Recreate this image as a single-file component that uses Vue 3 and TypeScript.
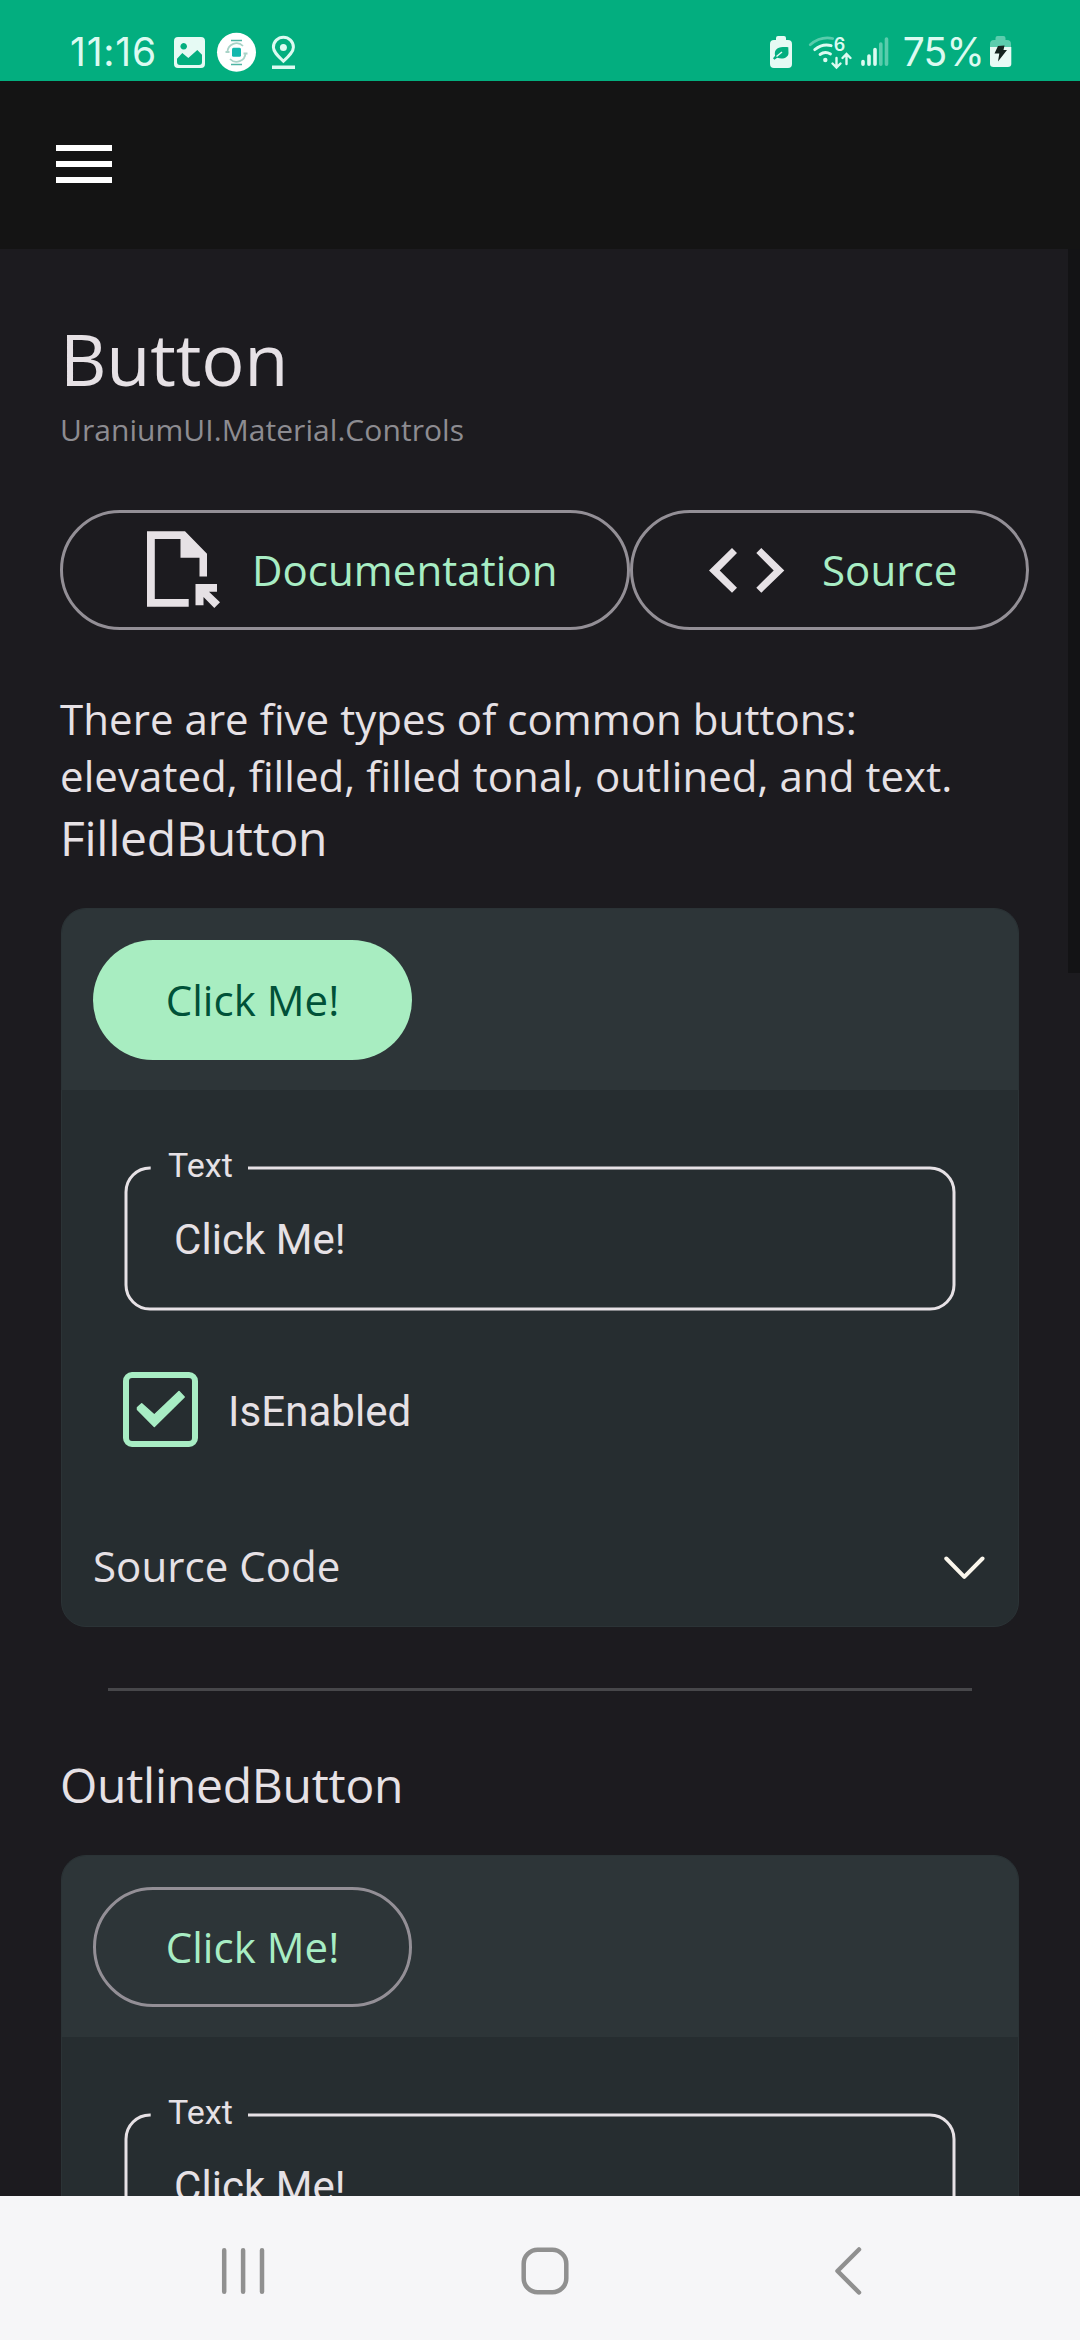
<script setup lang="ts">
interface Sample {
  title: string
  variant: 'filled' | 'outlined'
  text: string
}

const samples: Sample[] = [
  { title: 'FilledButton', variant: 'filled', text: 'Click Me!' },
  { title: 'OutlinedButton', variant: 'outlined', text: 'Click Me!' },
]
</script>

<template>
  <div class="screen">
    <header class="status">
      <span class="clock">11:16</span>
      <svg class="notifications" width="124" height="42" viewBox="0 0 124 42">
        <path fill="#e6faf4" fill-rule="evenodd" d="M4 5h23a4 4 0 0 1 4 4v23a4 4 0 0 1-4 4h-23a4 4 0 0 1-4-4v-23a4 4 0 0 1 4-4zM9.700 11a3.300 3.300 0 1 0 .01 0zM3 26.700v3.300q0 3 3 3h19q3 0 3-3v-7.300l-4.700-4.700-9 8-6-5z" />
        <circle cx="62.500" cy="20.300" r="19.500" fill="#fff" />
        <rect x="58" y="15.800" width="9" height="9" rx="1.500" fill="#14b8ae" />
        <path d="M57 8.500h11M57 32.500h11" stroke="#4fb5a4" stroke-width="1.600" />
        <path d="M53.500 20a9 9 0 0 1 15.500-6M71.500 21a9 9 0 0 1-15.500 6" fill="none" stroke="#a9d3c8" stroke-width="1.800" />
        <path d="M51.500 20h4M69.500 21.500h4" stroke="#a9d3c8" stroke-width="2" />
        <path d="M109.400 29.200C104 24 99.400 20 99.400 15.200a10 10 0 0 1 20 0C119.400 20 115 24 109.400 29.200z" fill="none" stroke="#dcfaf1" stroke-width="3" />
        <circle cx="109.400" cy="15.600" r="3.500" fill="#dcfaf1" />
        <rect x="98" y="33.500" width="23" height="3.500" fill="#dcfaf1" />
      </svg>
      <svg class="signals" width="122" height="42" viewBox="0 0 122 42">
        <path fill="#e6faf4" d="M8 4h6q2 0 2 2v2h2q4 0 4 4v20q0 4-4 4H4q-4 0-4-4V12q0-4 4-4h2V6q0-2 2-2z" />
        <path fill="#03ae7f" d="M18.300 15.200c-3-.2-8-.5-11 1.400-2.500 1.700-2.900 4.600-2.200 7.100L3 26.200l1.400 1.600 2.800-2c6 2 11-.3 11.300-4.600z" />
        <path d="M6.500 24.500l5.500-4.500" stroke="#e6faf4" stroke-width="1.400" />
        <g fill="none" stroke="#dcfaf1" stroke-width="2.800" stroke-linecap="round">
          <path d="M40.200 12.700q10.500-8.800 22.500-6.200" opacity=".4" />
          <path d="M44.700 17.700q8-6.500 16.500-4" />
          <path d="M50 22.500q5-3.700 10.500-.5" />
          <path d="M66.500 26v9M62.500 31.500l4 4 4-4M76.500 32v-9.500M72.500 26l4-4 4 4" stroke-width="2.400" />
        </g>
        <circle cx="55.300" cy="28" r="2.200" fill="#dcfaf1" />
        <text x="63.800" y="18.700" class="wifi-generation">6</text>
        <g stroke="#dcfaf1" stroke-width="3.600" stroke-linecap="round">
          <path d="M93 29.500v2.700M99 24v8.200M105 17.500v14.700" />
          <path d="M110.800 12v20.200M116.500 7v25.200" opacity=".4" />
        </g>
      </svg>
      <span class="percent">75%</span>
      <svg width="22" height="42" viewBox="0 0 22 42">
        <path fill="#5ccdae" d="M7.500 4h6q2 0 2 2v2H17q4 0 4 4v3H0v-3q0-4 4-4h1.500V6q0-2 2-2z" />
        <path fill="#eafaf5" d="M0 15h21.300v17q0 3-3.500 3H3.500Q0 35 0 32z" />
        <path fill="#15231f" d="M8 14l6.500-.5-1 4.500H17L8 29.500l1.300-8H4.500z" />
      </svg>
    </header>

    <nav class="toolbar">
      <button class="menu" aria-label="Menu"><i /><i /><i /></button>
    </nav>

    <main class="page">
      <h1>Button</h1>
      <p class="namespace">UraniumUI.Material.Controls</p>

      <div class="links">
        <button class="btn outlined documentation">
          <svg width="74" height="78" viewBox="0 0 74 78" fill="#e6e1e5">
            <path d="M0 .3h38l22 22.500v22.700h-7.500V26.700H33.500V8H7.800v60h33.900v7.700H0z" />
            <path d="M48.500 53H70v7.700h-8L73 71.300 67.300 77 56.500 66v8.300h-8z" />
          </svg>
          <span>Documentation</span>
        </button>
        <button class="btn outlined source">
          <svg width="76" height="45" viewBox="0 0 76 45" fill="#e6e1e5">
            <path d="M0 22.400L23 0l5 5-17.300 17.400L28 39.800l-5 5zM47.300 5l5-5 23 22.400-23 22.400-5-5 17.400-17.400z" />
          </svg>
          <span>Source</span>
        </button>
      </div>

      <p class="intro">There are five types of common buttons: elevated, filled, filled tonal, outlined, and text.</p>

      <template v-for="(sample, i) in samples" :key="sample.title">
        <hr v-if="i > 0" />
        <h2>{{ sample.title }}</h2>
        <section class="card">
          <div class="preview">
            <button class="btn demo" :class="sample.variant"><span>{{ sample.text }}</span></button>
          </div>
          <div class="options">
            <div class="field">
              <svg class="outline" width="832" height="146" viewBox="0 0 832 146">
                <path d="M26.700 2H26a24 24 0 0 0-24 24v93a24 24 0 0 0 24 24h780a24 24 0 0 0 24-24V26a24 24 0 0 0-24-24H124" />
              </svg>
              <span class="label">Text</span>
              <span class="value">{{ sample.text }}</span>
            </div>
            <label class="check">
              <span class="box">
                <svg width="63" height="63" viewBox="0 0 63 63">
                  <path d="M8.500 29.500L12.700 25.800 25.300 37 50 13.600 55.200 19 25.300 48.500 8.500 31.500z" fill="#a8edc4" stroke="#a8edc4" stroke-width="1.500" stroke-linejoin="round" />
                </svg>
              </span>
              <span class="caption">IsEnabled</span>
            </label>
          </div>
          <div class="expander">
            <span>Source Code</span>
            <svg width="41" height="24" viewBox="0 0 41 24">
              <path d="M2.300 2.500L20.300 20.800 38.500 2.500" />
            </svg>
          </div>
        </section>
      </template>

      <div class="scrollbar" />
    </main>

    <footer class="navbar">
      <svg width="44" height="48" viewBox="0 0 44 48">
        <path d="M3.200 3.200v41.600M22.100 3.200v41.600M41 3.200v41.600" />
      </svg>
      <svg class="home" width="48" height="48" viewBox="0 0 48 48">
        <rect x="2.700" y="2.700" width="42.600" height="42.600" rx="14" />
      </svg>
      <svg class="back" width="28" height="48" viewBox="0 0 28 48">
        <path d="M25 2.500L3.500 24l21.500 21.500" />
      </svg>
    </footer>
  </div>
</template>

<style>
body {
  margin: 0;
  background: #1c1b1f;
}
</style>

<style scoped>
.screen {
  width: 1080px;
  height: 2340px;
  display: flex;
  flex-direction: column;
  overflow: hidden;
  background: #1c1b1f;
  color: #e6e1e5;
  font-family: "Open Sans", "Noto Sans", sans-serif;
  font-size: 42px;
  letter-spacing: 0.06px;
}
h1, h2, p {
  margin: 0;
  font-weight: 400;
}
svg {
  display: block;
  flex: none;
}
button {
  font: inherit;
  letter-spacing: inherit;
  padding: 0;
  border: 0;
  background: none;
}

.status {
  height: 81px;
  flex: none;
  display: flex;
  box-sizing: border-box;
  padding: 32px 0 0 70px;
  background: #03ae7f;
  color: #dcfaf1;
  font-family: Inter, Roboto, sans-serif;
  font-size: 39px;
  line-height: 40px;
}
.clock {
  width: 104px;
  letter-spacing: 0.8px;
}
.signals {
  margin-left: 471.700px;
}
.wifi-generation {
  fill: #dcfaf1;
  font-size: 18px;
  font-weight: 600;
}
.percent {
  width: 87px;
  margin-left: 11px;
  letter-spacing: -0.8px;
}

.toolbar {
  height: 168px;
  flex: none;
  display: flex;
  align-items: center;
  box-sizing: border-box;
  padding: 0 0 8px 56px;
  background: #141414;
}
.menu {
  display: flex;
  flex-direction: column;
  gap: 10px;
  padding-top: 6px;
}
.menu i {
  width: 56px;
  height: 6px;
  background: #fff;
}

.page {
  position: relative;
  height: 1947px;
  flex: none;
  box-sizing: border-box;
  padding: 60px 60px 0;
  overflow: hidden;
}
h1 {
  font-size: 72px;
  line-height: 98px;
  letter-spacing: -0.2px;
}
.namespace {
  margin-top: 2px;
  font-size: 30px;
  line-height: 41px;
  color: #8d8c91;
}
.links {
  display: flex;
  width: 969px;
  margin-top: 60px;
}
.btn {
  height: 120px;
  box-sizing: border-box;
  border-radius: 60px;
  display: flex;
  align-items: center;
  flex: none;
  line-height: 57px;
  color: #a8edc4;
}
.btn span {
  padding-bottom: 1px;
}
.btn.outlined {
  border: 3px solid #938f96;
}
.btn.filled {
  background: #a8edc1;
  color: #005138;
}
.documentation {
  width: 570px;
  padding-left: 84px;
  gap: 31px;
}
.source {
  width: 399px;
  padding-left: 76px;
  gap: 37px;
}
.demo {
  width: 319px;
  justify-content: center;
}
.intro {
  margin-top: 60px;
  line-height: 57px;
}
h2 {
  padding-top: 1px;
  font-size: 48px;
  line-height: 65px;
  letter-spacing: -0.26px;
}
hr {
  height: 3px;
  margin: 61px 48px 60px;
  border: 0;
  background: #47474a;
}

.card {
  height: 719px;
  box-sizing: border-box;
  margin: 38px 1px 0;
  border: 1px solid #2b3336;
  border-radius: 25px;
  overflow: hidden;
  background: #262d30;
}
.preview {
  height: 181px;
  box-sizing: border-box;
  padding: 31px;
  background: #2d3538;
}
.options {
  padding: 76px 62px 0;
  font-family: Roboto, sans-serif;
}
.field {
  position: relative;
  height: 146px;
  display: flex;
  align-items: center;
}
.outline {
  position: absolute;
  left: 0;
  top: 0;
}
.outline path {
  fill: none;
  stroke: #e6e1e5;
  stroke-width: 3px;
}
.label {
  position: absolute;
  left: 44px;
  top: -21px;
  font-size: 34px;
  line-height: 40px;
}
.value {
  padding: 1px 0 0 50px;
  line-height: 50px;
}
.check {
  display: flex;
  align-items: center;
  gap: 30px;
  margin: 60px 0 0 -1px;
  line-height: 50px;
}
.caption {
  padding-top: 4px;
}
.box {
  width: 63px;
  height: 63px;
  border: 6px solid #a8edc4;
  border-radius: 9px;
}
.expander {
  display: flex;
  justify-content: space-between;
  align-items: center;
  height: 57px;
  margin: 90px 33px 0 31px;
}
.expander svg {
  margin-top: 4px;
}
.expander path {
  fill: none;
  stroke: #faf6ec;
  stroke-width: 4px;
  stroke-linecap: round;
  stroke-linejoin: round;
}
.scrollbar {
  position: absolute;
  right: 0;
  top: 0;
  width: 12px;
  height: 724px;
  background: #131315;
}

.navbar {
  height: 144px;
  flex: none;
  display: flex;
  align-items: center;
  box-sizing: border-box;
  padding: 6px 0 0 221px;
  background: #f6f6f8;
}
.navbar svg {
  fill: none;
  stroke: #909090;
  stroke-width: 4.500px;
  stroke-linecap: round;
  stroke-linejoin: round;
}
.home {
  margin-left: 256px;
}
.back {
  margin-left: 265px;
}
</style>
